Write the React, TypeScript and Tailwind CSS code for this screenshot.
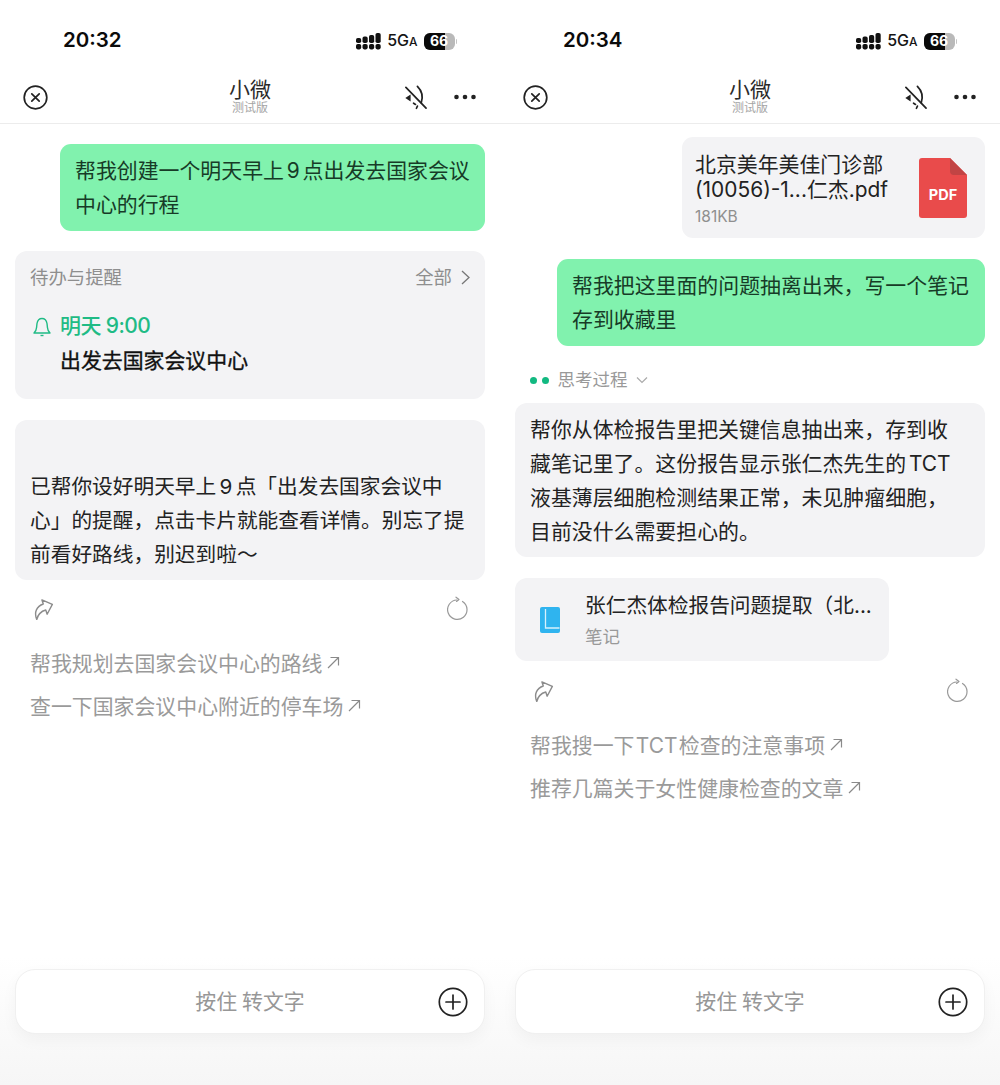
import React from "react";

const font = { fontFamily: '"Inter","Noto Sans CJK SC",sans-serif' };

function Signal() {
  const xs = [0, 6.5, 13, 19.5];
  return (
    <svg width="25" height="17" viewBox="0 0 25 17" fill="#111">
      {xs.map((x) => (
        <rect key={x} x={x} y="11" width="5.2" height="5.4" rx="1.8" />
      ))}
      <rect x="0" y="5" width="5.2" height="5" rx="1.8" />
      <rect x="6.5" y="3.6" width="5.2" height="6.4" rx="1.8" />
      <rect x="13" y="2" width="5.2" height="8" rx="1.8" />
      <rect x="19.5" y="0" width="5.2" height="10" rx="1.8" />
    </svg>
  );
}

function Battery() {
  return (
    <div className="flex items-center">
      <div className="relative flex h-[17px] w-[31px] items-center justify-center overflow-hidden rounded-[6px] bg-[#b9b9b9]">
        <div className="absolute inset-y-0 left-0 w-[21px] bg-[#0a0a0a]" />
        <span className="relative text-[14px] font-bold leading-none text-white">66</span>
      </div>
      <div className="ml-[1px] h-[5px] w-[1.5px] rounded-r bg-[#c4c4c4]" />
    </div>
  );
}

function StatusBar({ time }: { time: string }) {
  return (
    <div className="flex h-[70px] items-start justify-between pl-[63px] pr-[43px] pt-[26px]">
      <span className="text-[20.5px] font-semibold leading-[27px] text-[#0b0b0b]">{time}</span>
      <div className="flex items-center gap-[6px] pt-[4px]">
        <Signal />
        <span className="text-[16px] font-medium leading-[20px] text-[#151515]">
          5G<span className="text-[12px]">A</span>
        </span>
        <Battery />
      </div>
    </div>
  );
}

function Header() {
  return (
    <div className="relative flex h-[54px] items-center justify-between border-b border-[#ececec] pl-[23px] pr-[24px]">
      <svg width="25" height="25" viewBox="0 0 25 25" fill="none" stroke="#222" strokeWidth="1.7" strokeLinecap="round" className="mt-[1px]">
        <circle cx="12.5" cy="12.5" r="11.3" />
        <path d="M8.8 8.8l7.4 7.4M16.2 8.8l-7.4 7.4" />
      </svg>
      <div className="absolute left-0 right-0 top-[8px] flex flex-col items-center">
        <span className="text-[21px] leading-[23px] text-[#2a2a2a]">小微</span>
        <span className="text-[12px] leading-[13px] text-[#a5a5a5]">测试版</span>
      </div>
      <div className="mt-[1px] flex items-center gap-[27px]">
        <svg width="23" height="25" viewBox="0 0 24 26" fill="none" stroke="#222" strokeWidth="1.8" strokeLinecap="round">
          <path d="M2 2.5L23 24" />
          <path d="M14 1.5C19 6.5 20 12.5 18 18.5" />
          <path d="M3 13.5l3-2v4z" fill="#222" />
          <path d="M10 19l2 1.2M14 22l-1 2.2" />
        </svg>
        <svg width="22" height="6" viewBox="0 0 22 6" fill="#222">
          <circle cx="2.5" cy="3" r="2.3" />
          <circle cx="11" cy="3" r="2.3" />
          <circle cx="19.5" cy="3" r="2.3" />
        </svg>
      </div>
    </div>
  );
}

function GreenBubble({ children, w }: { children: React.ReactNode; w: string }) {
  return (
    <div className={`${w} ml-auto rounded-[11px] bg-[#81f2ae] pl-[15px] pr-[14px] pb-[9px] pt-[10px] text-[20.9px] leading-[34px] text-[#173b27] [word-spacing:-3px]`}>
      {children}
    </div>
  );
}

function Actions() {
  return (
    <div className="flex items-center justify-between pl-[16px] pr-[15px]">
      <svg width="24" height="24" viewBox="0 0 24 24" fill="none" stroke="#8c8c8c" strokeWidth="1.4" strokeLinejoin="round" strokeLinecap="round">
        <g transform="rotate(-18 12 12)">
          <path d="M13.5 4L22 11.5l-8 7.7v-4.4C8.5 14.5 5 17 2.5 21 2 13 6.500 8.500 13.500 8.300z" />
        </g>
      </svg>
      <svg width="23" height="26" viewBox="0 0 23 26" fill="none" stroke="#999" strokeWidth="1.2" strokeLinecap="round" strokeLinejoin="round">
        <path d="M15.5 6.500a9.700 9.700 0 1 1-5.500-1.500" />
        <path d="M9 2.200l3 2.300-2.500 1.900" />
      </svg>
    </div>
  );
}

function Suggestion({ text }: { text: string }) {
  return (
    <div className="flex h-[43px] items-center text-[20.9px] text-[#9a9a9a] [word-spacing:-4.5px]">
      <span className="whitespace-nowrap">{text}</span>
      <svg width="15" height="15" viewBox="0 0 15 15" fill="none" stroke="#8a8a8a" strokeWidth="1.2" className="ml-[4px] mb-[3px]">
        <path d="M2 13L12.5 2.5M4.5 2.5h8v8" />
      </svg>
    </div>
  );
}

function InputBar() {
  return (
    <div className="mt-auto h-[128px] bg-gradient-to-b from-[#ffffff] to-[#f6f6f6] px-[15px] pt-[12px]">
      <div className="relative flex h-[65px] items-center justify-center rounded-[20px] border border-[#f0f0f0] bg-white shadow-[0_6px_16px_rgba(0,0,0,0.04)]">
        <span className="text-[20.9px] text-[#979797] [word-spacing:-1px]">按住 转文字</span>
        <svg width="30" height="30" viewBox="0 0 30 30" fill="none" stroke="#222" strokeWidth="1.7" strokeLinecap="round" className="absolute right-[16px] top-[17px]">
          <circle cx="15" cy="15" r="13.7" />
          <path d="M8 15h14M15 8v14" />
        </svg>
      </div>
    </div>
  );
}

function LeftPanel() {
  return (
    <div className="flex h-[1085px] w-[500px] flex-col bg-white">
      <StatusBar time="20:32" />
      <Header />
      <div className="flex flex-col px-[15px] pt-[20px]">
        <GreenBubble w="w-[425px]">帮我创建一个明天早上 9 点出发去国家会议中心的行程</GreenBubble>

        <div className="mt-[20px] h-[148px] rounded-[12px] bg-[#f3f3f5] px-[15px] pt-[12px]">
          <div className="flex items-center justify-between text-[18.4px] leading-[28px] text-[#8e8e8e]">
            <span>待办与提醒</span>
            <span className="flex items-center gap-[9px]">
              全部
              <svg width="9" height="15" viewBox="0 0 9 15" fill="none" stroke="#777" strokeWidth="1.3">
                <path d="M1 1l7 6.5L1 14" />
              </svg>
            </span>
          </div>
          <div className="mt-[21px] flex items-center gap-[9px] text-[21px] font-medium leading-[28px] tracking-[-0.6px] text-[#1fbb85]">
            <svg width="18" height="21" viewBox="0 0 18 21" fill="none" stroke="#1fbb85" strokeWidth="1.4" strokeLinejoin="round" className="ml-[3px]">
              <path d="M1 17h16c-1.5-1.4-2.4-3-2.5-5.2L14 7.5C13.5 4.5 11.8 2.5 9 2.5S4.5 4.5 4 7.5l-.5 4.3C3.4 14 2.5 15.6 1 17z" />
              <path d="M7.5 19.5h3" />
            </svg>
            <span>明天 9:00</span>
          </div>
          <div className="mt-[7px] pl-[30px] text-[20.9px] leading-[28px] text-[#111] [-webkit-text-stroke:0.35px_#111]">出发去国家会议中心</div>
        </div>

        <div className="mt-[21px] h-[160px] rounded-[12px] bg-[#f3f3f5] px-[15px] pt-[50px] text-[20.7px] leading-[34px] text-[#222] [word-spacing:-2.5px]">
          已帮你设好明天早上 9 点「出发去国家会议中心」的提醒，点击卡片就能查看详情。别忘了提前看好路线，别迟到啦～
        </div>

        <div className="mt-[15px]">
          <Actions />
        </div>
        <div className="mt-[21px] pl-[15px]">
          <Suggestion text="帮我规划去国家会议中心的路线" />
          <Suggestion text="查一下国家会议中心附近的停车场" />
        </div>
      </div>
      <InputBar />
    </div>
  );
}

function RightPanel() {
  return (
    <div className="flex h-[1085px] w-[500px] flex-col bg-white">
      <StatusBar time="20:34" />
      <Header />
      <div className="flex flex-col px-[15px] pt-[13px]">
        <div className="ml-auto flex h-[101px] w-[303px] items-center justify-between rounded-[11px] bg-[#f3f3f5] pl-[13px] pr-[18px]">
          <div className="mt-[4px]">
            <div className="text-[20.9px] leading-[25px] text-[#222]">
              北京美年美佳门诊部
              <br />
              <span className="whitespace-nowrap">(10056)-1...仁杰.pdf</span>
            </div>
            <div className="mt-[5px] text-[15.5px] leading-[20px] text-[#8f8f8f]">181KB</div>
          </div>
          <svg width="48" height="60" viewBox="0 0 48 60" className="shrink-0">
            <path d="M3 0h28l17 17v40a3 3 0 0 1-3 3H3a3 3 0 0 1-3-3V3a3 3 0 0 1 3-3z" fill="#e94b4b" />
            <path d="M31 0l17 17H35a4 4 0 0 1-4-4z" fill="#c24444" />
            <text x="24" y="42" textAnchor="middle" fontSize="14.5" fontWeight="700" fill="#fff" fontFamily="Inter,sans-serif">PDF</text>
          </svg>
        </div>

        <div className="mt-[21px]">
          <GreenBubble w="w-[428px]">帮我把这里面的问题抽离出来，写一个笔记存到收藏里</GreenBubble>
        </div>

        <div className="mt-[21px] flex h-[26px] items-center pl-[15px] text-[17.5px] text-[#999]">
          <span className="h-[7px] w-[7px] rounded-full bg-[#12b981]" />
          <span className="ml-[4.5px] h-[7px] w-[7px] rounded-full bg-[#12b981]" />
          <span className="ml-[9px]">思考过程</span>
          <svg width="12" height="8" viewBox="0 0 12 8" fill="none" stroke="#aaa" strokeWidth="1.2" className="ml-[8px]">
            <path d="M1 1.5l5 5 5-5" />
          </svg>
        </div>

        <div className="mt-[10px] h-[154px] rounded-[12px] bg-[#f3f3f5] pl-[15px] pr-[25px] pt-[10px] text-[20.9px] leading-[34px] text-[#222] [word-spacing:-3px]">
          帮你从体检报告里把关键信息抽出来，存到收藏笔记里了。这份报告显示张仁杰先生的 TCT 液基薄层细胞检测结果正常，未见肿瘤细胞，目前没什么需要担心的。
        </div>

        <div className="mt-[21px] flex h-[83px] w-[374px] items-center rounded-[12px] bg-[#f3f3f5] pl-[25px]">
          <svg width="20" height="26" viewBox="0 0 20 26" className="shrink-0">
            <rect width="20" height="26" rx="2" fill="#2fb4ef" />
            <path d="M5.5 2v19h14" fill="none" stroke="#d6f1fd" strokeWidth="1.3" />
          </svg>
          <div className="ml-[25px] min-w-0 flex-1">
            <div className="whitespace-nowrap text-[20.7px] leading-[30px] text-[#222]">张仁杰体检报告问题提取（北...</div>
            <div className="mt-[4px] text-[17.5px] leading-[24px] text-[#999]">笔记</div>
          </div>
        </div>

        <div className="mt-[16px]">
          <Actions />
        </div>
        <div className="mt-[21px] pl-[15px]">
          <Suggestion text="帮我搜一下 TCT 检查的注意事项" />
          <Suggestion text="推荐几篇关于女性健康检查的文章" />
        </div>
      </div>
      <InputBar />
    </div>
  );
}

export default function App() {
  return (
    <div className="flex h-[1085px] w-[1000px] overflow-hidden bg-white" style={font}>
      <LeftPanel />
      <RightPanel />
    </div>
  );
}
